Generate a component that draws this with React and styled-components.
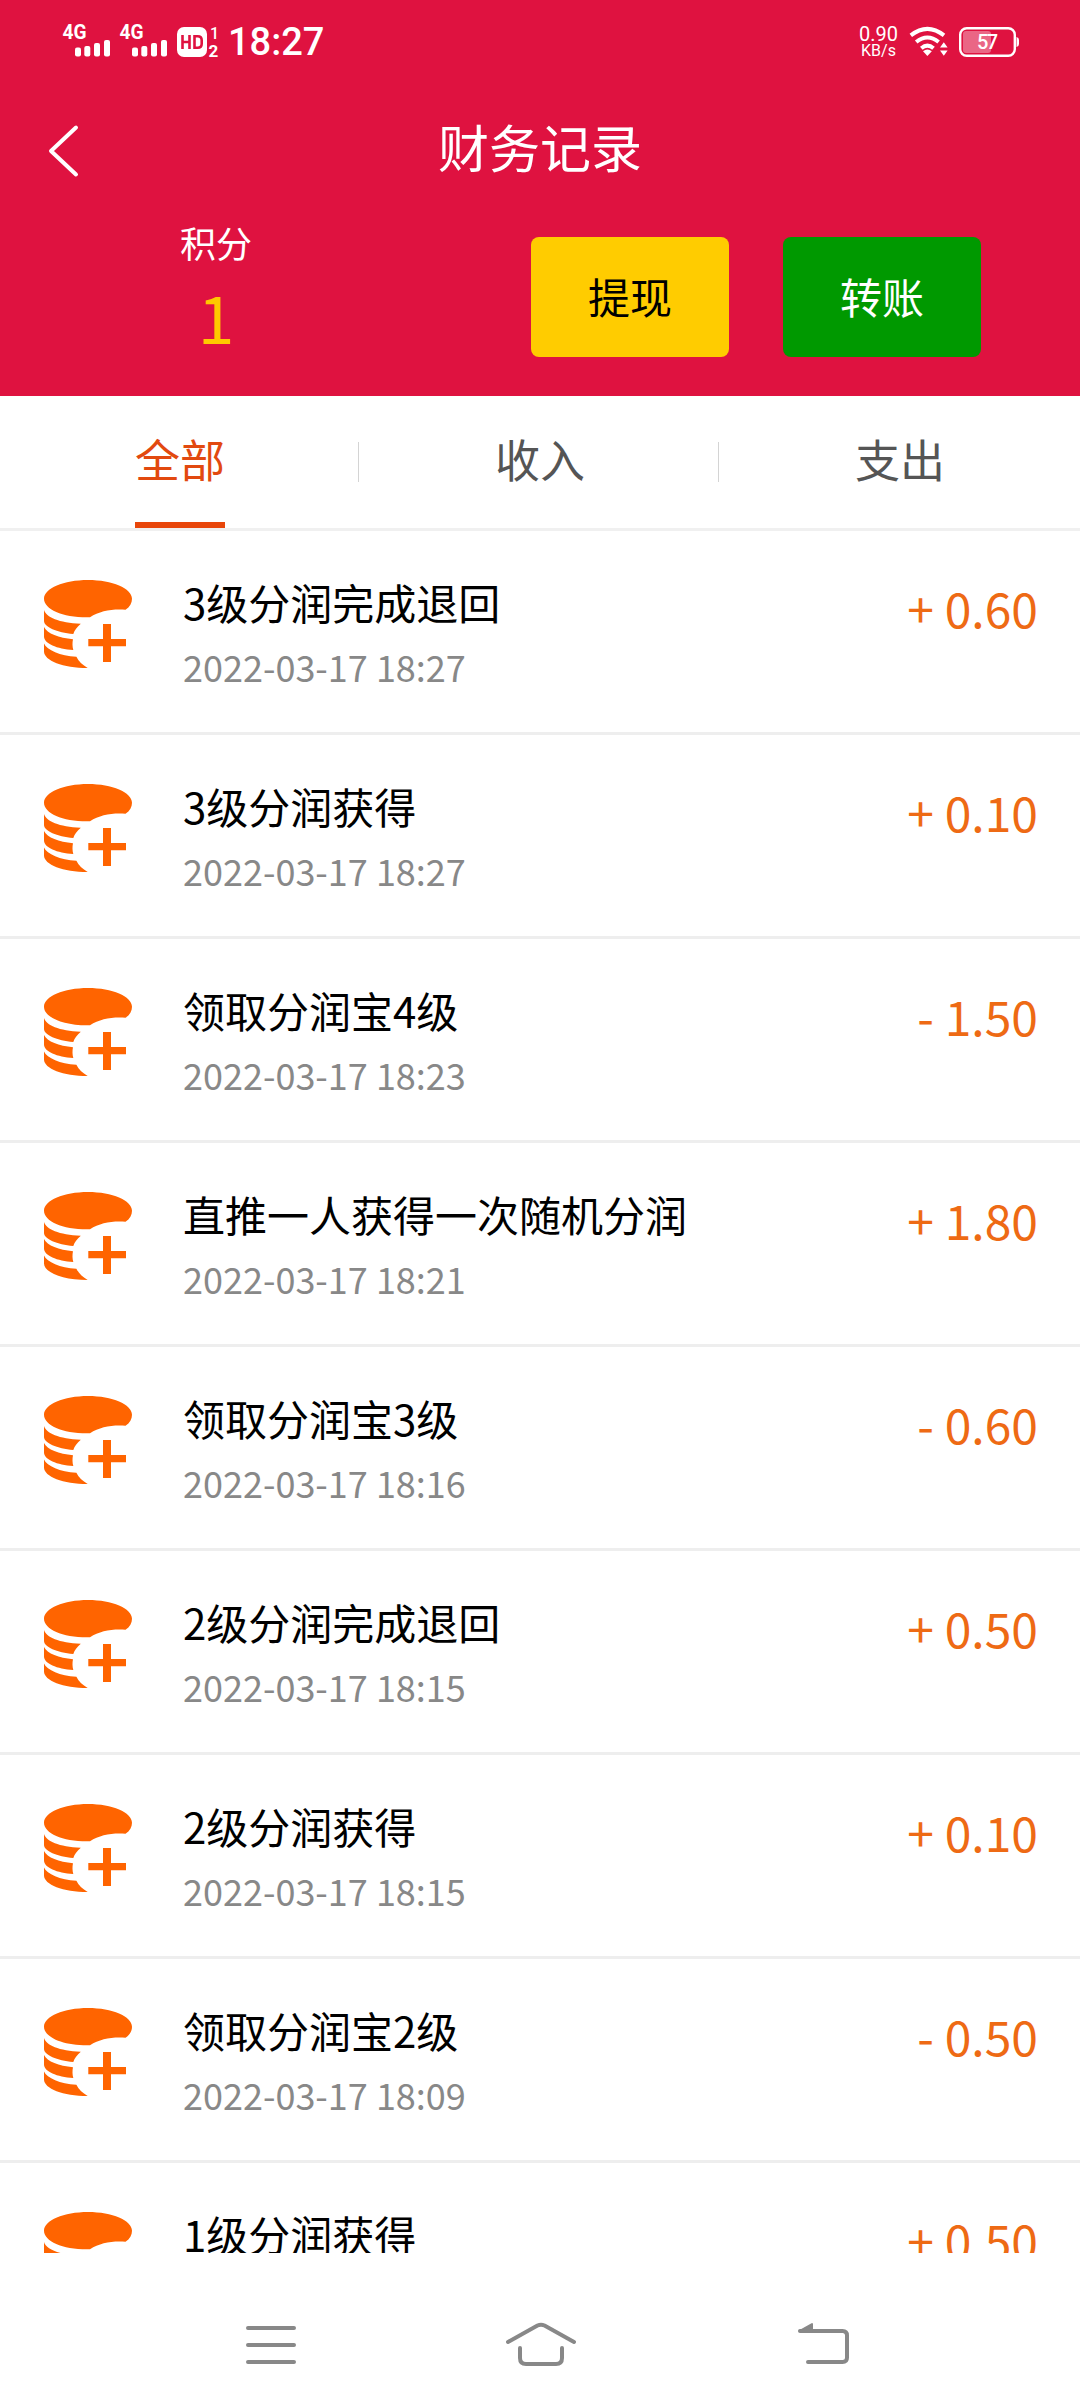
import React, { useState } from 'react';
import styled, { createGlobalStyle } from 'styled-components';

const GlobalStyle = createGlobalStyle`
  * {
    box-sizing: border-box;
  }

  body {
    margin: 0;
    background: #fff;
    font-family: 'Noto Sans CJK SC', 'Noto Sans', sans-serif;
  }

  svg {
    display: block;
    flex-shrink: 0;
    overflow: visible;
  }
`;

const Screen = styled.div`
  width: 1080px;
  height: 2408px;
  display: flex;
  flex-direction: column;
  overflow: hidden;
  background: #fff;
`;

const Header = styled.header`
  height: 396px;
  flex-shrink: 0;
  color: #fff;
  background: #df1240;
`;

const StatusBar = styled.div`
  height: 84px;
  padding: 0 61px 0 62px;
  display: flex;
  justify-content: space-between;
  align-items: center;
  font-family: Roboto, sans-serif;
`;

const StatusGroup = styled.div`
  display: flex;
  align-items: center;
`;

const Clock = styled.div`
  margin-left: 5px;
  font-size: 38px;
  font-weight: 500;
  line-height: 44px;
`;

const Speed = styled.div`
  margin-right: 11px;
  text-align: center;
  white-space: nowrap;
`;

const SpeedValue = styled.div`
  font-size: 20px;
  line-height: 17px;
`;

const SpeedUnit = styled.div`
  font-size: 16px;
  line-height: 15px;
`;

const NavBar = styled.div`
  height: 124px;
  padding: 0 47px;
  display: grid;
  grid-template-columns: 1fr auto 1fr;
  align-items: center;
`;

const BackButton = styled.button`
  width: 34px;
  margin-top: 9px;
  padding: 0;
  border: none;
  background: none;
  cursor: pointer;
`;

const Title = styled.h1`
  margin: 0;
  font-size: 51px;
  font-weight: 400;
  line-height: 76px;
`;

const Summary = styled.div`
  padding-right: 99px;
  display: flex;
`;

const Balance = styled.div`
  width: 432px;
  padding-top: 9px;
  text-align: center;
`;

const BalanceLabel = styled.div`
  font-size: 36px;
  line-height: 50px;
`;

const BalanceValue = styled.div`
  color: #ffc800;
  font-size: 66px;
  line-height: 96px;
`;

const Actions = styled.div`
  flex: 1;
  padding-top: 29px;
  display: flex;
  justify-content: flex-end;
  gap: 54px;
`;

const ActionButton = styled.button`
  width: 198px;
  height: 120px;
  padding: 0 0 3px;
  border: none;
  border-radius: 8px;
  color: ${props => props.$color};
  background: ${props => props.$background};
  font-family: inherit;
  font-size: 42px;
  cursor: pointer;
`;

const Tabs = styled.div`
  height: 135px;
  flex-shrink: 0;
  display: flex;
  border-bottom: 3px solid #f0f0f0;
`;

const TabCell = styled.div`
  flex: 1;
  display: flex;
  justify-content: center;
`;

const Tab = styled.button`
  width: 90px;
  padding: 0 0 ${props => (props.$active ? 1 : 7)}px;
  border: none;
  border-bottom: ${props => (props.$active ? '6px solid #e8460a' : 'none')};
  color: ${props => (props.$active ? '#e2490f' : '#555')};
  background: none;
  font-family: inherit;
  font-size: 45px;
  white-space: nowrap;
  cursor: pointer;
`;

const Divider = styled.div`
  width: 1px;
  height: 40px;
  margin: 46px 1px 0 -2px;
  background: #d4d4d4;
`;

const List = styled.div`
  flex: 1;
  min-height: 0;
  overflow: hidden;
`;

const Row = styled.div`
  height: 204px;
  padding: 41px 42px 0 44px;
  display: flex;
  align-items: flex-start;
  border-bottom: 3px solid #eee;
`;

const IconWrapper = styled.div`
  margin-top: 8px;
`;

const Info = styled.div`
  flex: 1;
  margin-left: 51px;
`;

const Name = styled.div`
  color: #000;
  font-size: 42px;
  line-height: 60px;
`;

const Time = styled.div`
  margin-top: 7px;
  color: #888;
  font-size: 36px;
  line-height: 54px;
`;

const Amount = styled.div`
  margin-top: 6px;
  color: #ee6a14;
  font-size: 48px;
  line-height: 59px;
`;

const SystemBar = styled.div`
  height: 155px;
  flex-shrink: 0;
  padding: 64px 0 0 243px;
  display: grid;
  grid-template-columns: 261px 292px 56px;
  background: #fff;
`;

const SignalIcon = () => (
  <svg width="57" height="34" viewBox="0 0 57 34" fill="#fff">
    <text x="0.5" y="14.3" fontFamily="Roboto, sans-serif" fontSize="20" fontWeight="700" textLength="24" lengthAdjust="spacingAndGlyphs">4G</text>
    <rect x="13" y="22.5" width="6" height="9" rx="2" />
    <rect x="22.3" y="21" width="6" height="10.5" rx="2" />
    <rect x="32" y="18" width="6" height="13.5" rx="2" />
    <rect x="42" y="15" width="6" height="16.5" rx="2" />
  </svg>
);

const HdIcon = () => (
  <svg width="47" height="30" viewBox="0 0 47 30" fill="#fff">
    <rect x="1" width="30" height="30" rx="7" />
    <path d="M6.5 8v14M13.5 8v14M6.5 15h7M18.5 9.2h3.2q4 0 4 4v3.6q0 4-4 4h-3.2z" fill="none" stroke="#df1240" strokeWidth="2.6" />
    <text x="34" y="11.5" fontFamily="Roboto, sans-serif" fontSize="16" fontWeight="500">1</text>
    <text x="32.5" y="29.5" fontFamily="Roboto, sans-serif" fontSize="17" fontWeight="700">2</text>
  </svg>
);

const WifiIcon = () => (
  <svg width="50" height="30" viewBox="0 0 50 30" fill="none" stroke="#fff" strokeWidth="4">
    <path d="M1.8 8.4Q18.4-4.6 35 8.4" />
    <path d="M7.2 15Q18.4 6 29.6 15" />
    <path d="M12.3 21.2Q18.4 16 24.5 21.2" />
    <path d="M14 24.3q4.4-3.4 8.8 0L18.4 29z" fill="#fff" stroke="none" />
    <path d="M31 20.6l3.8-5.4 3.8 5.4zM31 23.4l3.8 5.4 3.8-5.4z" fill="#fff" stroke="none" />
  </svg>
);

const BatteryIcon = () => (
  <svg width="60" height="30" viewBox="0 0 60 30">
    <rect x="4" y="4" width="28" height="22" rx="3" fill="#ea6685" />
    <rect x="1.2" y="1.2" width="54.6" height="27.6" rx="6.5" fill="none" stroke="#fff" strokeWidth="2.4" />
    <path d="M57.5 10q2.5.5 2.5 3v4q0 2.5-2.5 3z" fill="#fff" />
    <text x="28.5" y="22.3" textAnchor="middle" fill="#fff" fontFamily="Roboto, sans-serif" fontSize="20" fontWeight="500" textLength="21">57</text>
  </svg>
);

const BackIcon = () => (
  <svg width="34" height="54" viewBox="0 0 34 54" fill="none" stroke="#fff" strokeWidth="4" strokeLinecap="round" strokeLinejoin="round">
    <path d="M29 3.5L4 27l25 23.5" />
  </svg>
);

const CoinsIcon = () => (
  <svg width="88" height="88" viewBox="0 0 88 88" fill="#ff6400">
    <path d="M46 37.3C20 38 0 29.5 0 18.7 0 8.4 19.7 0 44 0s44 8.4 44 18.7c0 4.300-2 8-6.500 11.100C68 28.800 56 31 46 37.300z" />
    <path d="M0 30c2 7 15 13 36.800 13.700-3.800 3.300-6.300 6.300-7.500 10.300C13 52.500 0 47 0 41z" />
    <path d="M0 47c3 6.500 15 11 29 12.200-.8 3.800-.6 7.300.3 10.800C13 69 0 63.500 0 56.500z" />
    <path d="M0 63.500C3 70 16 76 32.400 76.700 34.500 81 38.500 85 43.700 88 19 88 0 80.500 0 71.500z" />
    <path d="M59 44h8v15h15v7.300H67V82h-8V66.300H44.300V59H59z" />
  </svg>
);

const MenuIcon = () => (
  <svg width="56" height="56" viewBox="0 0 56 56" fill="none" stroke="#888" strokeWidth="4" strokeLinecap="round">
    <path d="M5 11h46M5 28h46M5 45h46" />
  </svg>
);

const HomeIcon = () => (
  <svg width="74" height="56" viewBox="0 0 74 56" fill="none" stroke="#888" strokeWidth="4" strokeLinecap="round" strokeLinejoin="round">
    <path d="M4 25L33.500 8.500q3.500-1.500 7 0L70 25" />
    <path d="M16 31v10q0 6 6 6h30q6 0 6-6V31" />
  </svg>
);

const ReturnIcon = () => (
  <svg width="56" height="56" viewBox="0 0 56 56" fill="none" stroke="#888" strokeWidth="4" strokeLinecap="round" strokeLinejoin="round">
    <path d="M4 14h42.500q4.500 0 4.500 4.500v22q0 4.500-4.500 4.500H12" />
    <path d="M3.500 14L16 7v7z" fill="#888" strokeWidth="2" />
  </svg>
);

const tabs = ['全部', '收入', '支出'];

const records = [
  { name: '3级分润完成退回', time: '2022-03-17 18:27', amount: '+ 0.60' },
  { name: '3级分润获得', time: '2022-03-17 18:27', amount: '+ 0.10' },
  { name: '领取分润宝4级', time: '2022-03-17 18:23', amount: '- 1.50' },
  { name: '直推一人获得一次随机分润', time: '2022-03-17 18:21', amount: '+ 1.80' },
  { name: '领取分润宝3级', time: '2022-03-17 18:16', amount: '- 0.60' },
  { name: '2级分润完成退回', time: '2022-03-17 18:15', amount: '+ 0.50' },
  { name: '2级分润获得', time: '2022-03-17 18:15', amount: '+ 0.10' },
  { name: '领取分润宝2级', time: '2022-03-17 18:09', amount: '- 0.50' },
  { name: '1级分润获得', time: '2022-03-17 18:09', amount: '+ 0.50' },
];

const App = () => {
  const [active, setActive] = useState(0);

  return (
    <Screen>
      <GlobalStyle />
      <Header>
        <StatusBar>
          <StatusGroup>
            <SignalIcon />
            <SignalIcon />
            <HdIcon />
            <Clock>18:27</Clock>
          </StatusGroup>
          <StatusGroup>
            <Speed>
              <SpeedValue>0.90</SpeedValue>
              <SpeedUnit>KB/s</SpeedUnit>
            </Speed>
            <WifiIcon />
            <BatteryIcon />
          </StatusGroup>
        </StatusBar>
        <NavBar>
          <BackButton aria-label="返回"><BackIcon /></BackButton>
          <Title>财务记录</Title>
        </NavBar>
        <Summary>
          <Balance>
            <BalanceLabel>积分</BalanceLabel>
            <BalanceValue>1</BalanceValue>
          </Balance>
          <Actions>
            <ActionButton $color="#000" $background="#fc0">提现</ActionButton>
            <ActionButton $color="#fff" $background="#090">转账</ActionButton>
          </Actions>
        </Summary>
      </Header>
      <Tabs>
        {tabs.map((label, i) => (
          <React.Fragment key={label}>
            {i > 0 && <Divider />}
            <TabCell>
              <Tab $active={i === active} onClick={() => setActive(i)}>{label}</Tab>
            </TabCell>
          </React.Fragment>
        ))}
      </Tabs>
      <List>
        {records.map((item, i) => (
          <Row key={i}>
            <IconWrapper><CoinsIcon /></IconWrapper>
            <Info>
              <Name>{item.name}</Name>
              <Time>{item.time}</Time>
            </Info>
            <Amount>{item.amount}</Amount>
          </Row>
        ))}
      </List>
      <SystemBar>
        <MenuIcon />
        <HomeIcon />
        <ReturnIcon />
      </SystemBar>
    </Screen>
  );
};

export default App;
